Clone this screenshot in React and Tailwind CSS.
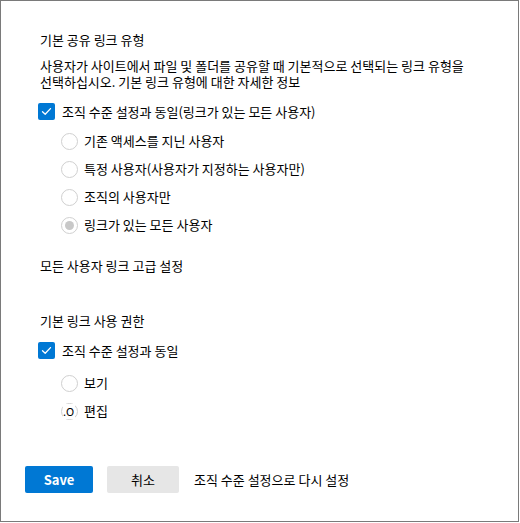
import React from "react";

const font = { fontFamily: '"Noto Sans CJK KR", "Noto Sans", sans-serif' };

const Checkbox = ({ label }) => (
  <div className="flex items-center h-[17px] -ml-[2px]">
    <div className="w-[17px] h-[17px] rounded-[2px] bg-[#0078d4] flex items-center justify-center">
      <svg width="11" height="11" viewBox="0 0 11 11" fill="none">
        <polyline points="1.5,5.8 4.2,8.3 9.5,2.6" stroke="white" strokeWidth="1.3" strokeLinecap="round" strokeLinejoin="round" />
      </svg>
    </div>
    <span className="ml-[7px]">{label}</span>
  </div>
);

const Radio = ({ label, selected, odd }) => (
  <div className="flex items-center h-[28px] pl-[21px]">
    <div className="relative w-[17px] h-[17px] rounded-full border border-[#d0d0d0] bg-white flex items-center justify-center">
      {selected && <div className="w-[9px] h-[9px] rounded-full bg-[#c8c8c8]" />}
      {odd && (
        <span className="absolute left-[1px] top-[0px] text-[11px] leading-[15px] text-black bg-white pr-[1px]">.O</span>
      )}
    </div>
    <span className="ml-[6px]">{label}</span>
  </div>
);

const App = () => {
  return (
    <div className="bg-white w-[520px] h-[523px]" style={font}>
      <div className="w-[519px] h-[522px] border border-[#7a7a7a] text-[13px] leading-[16px] text-black">
        <div className="pl-[39px]">
          <div className="mt-[31px]">기본 공유 링크 유형</div>
          <div className="mt-[10px]">
            <div>사용자가 사이트에서 파일 및 폴더를 공유할 때 기본적으로 선택되는 링크 유형을</div>
            <div>선택하십시오. 기본 링크 유형에 대한 자세한 정보</div>
          </div>
          <div className="mt-[13px]">
            <Checkbox label="조직 수준 설정과 동일(링크가 있는 모든 사용자)" />
          </div>
          <div className="mt-[7px]">
            <Radio label="기존 액세스를 지닌 사용자" />
            <Radio label="특정 사용자(사용자가 지정하는 사용자만)" />
            <Radio label="조직의 사용자만" />
            <Radio label="링크가 있는 모든 사용자" selected />
          </div>
          <div className="mt-[19px]">모든 사용자 링크 고급 설정</div>
          <div className="mt-[39px]">기본 링크 사용 권한</div>
          <div className="mt-[13px]">
            <Checkbox label="조직 수준 설정과 동일" />
          </div>
          <div className="mt-[10px]">
            <Radio label="보기" />
            <Radio label="편집" odd />
          </div>
        </div>
        <div className="flex items-center pl-[24px] mt-[41px]">
          <button className="w-[68px] h-[27px] rounded-[2px] bg-[#0078d4] text-white font-semibold text-[13px]">
            Save
          </button>
          <button className="ml-[14px] w-[72px] h-[27px] rounded-[2px] bg-[#e6e6e6] text-black text-[13px]">
            취소
          </button>
          <span className="ml-[15px]">조직 수준 설정으로 다시 설정</span>
        </div>
      </div>
    </div>
  );
};

export default App;
